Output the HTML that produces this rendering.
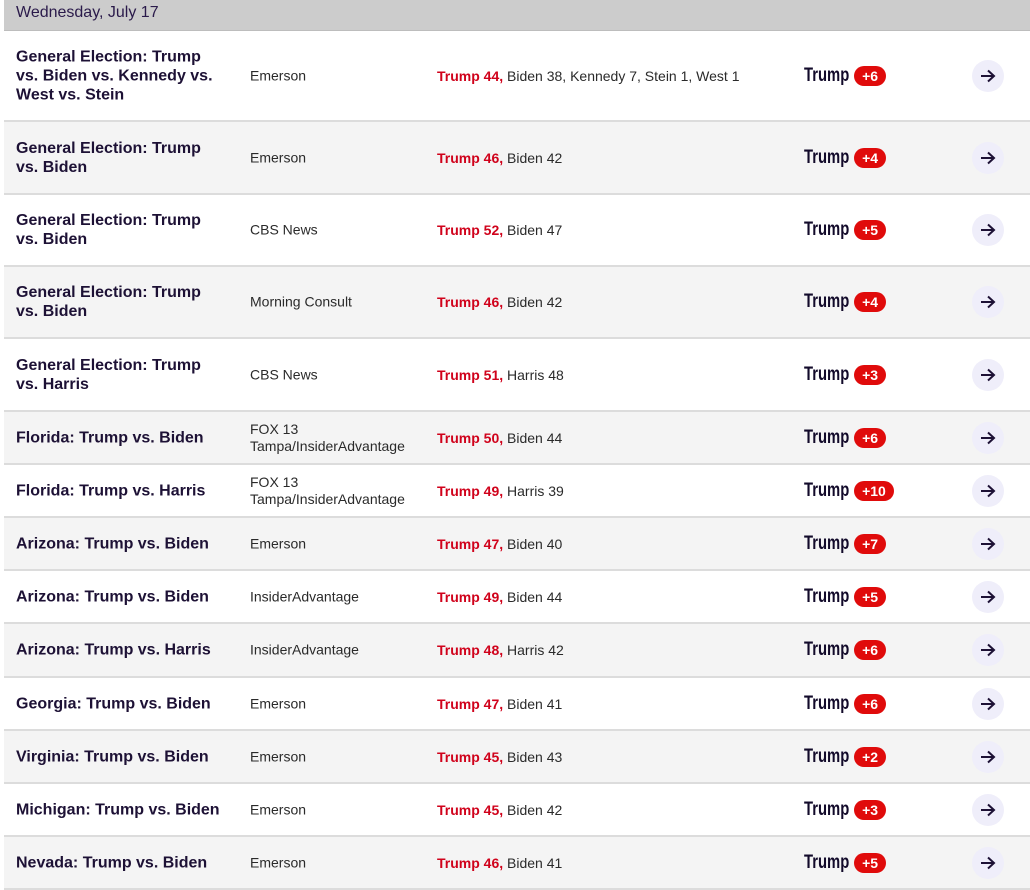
<!DOCTYPE html>
<html><head><meta charset="utf-8"><style>
body{margin:0;width:1030px;height:888px;overflow:hidden;background:#fff;font-family:"Liberation Sans",Arial,sans-serif;color:#1d1135}
.hd{position:absolute;left:4px;top:0;width:1026px;height:31px;background:#cccccc;border-bottom:1px solid #bdbdbd;box-sizing:border-box}
.hd span{position:absolute;left:12px;top:4px;font-size:16px;color:#2a1a4a}
.row{position:absolute;left:4px;width:1026px;border-bottom:2px solid #dcdcdc;box-sizing:border-box}
.row.g{background:#f4f4f4}
.c{position:absolute;top:50%;transform:translateY(-50%)}
.t{left:12px;width:205px;font-weight:bold;font-size:16px;line-height:19px;color:#1d1135}
.p{left:246px;font-size:14px;line-height:17px;color:#2a2a2a}
.r{left:433px;font-size:14px;color:#2a2a2a}
.r b{color:#d0021b}
.s{left:800px;font-weight:bold;font-size:19px;display:flex;align-items:center;color:#120a2a}
.s span{display:inline-block;transform:scaleX(.78);transform-origin:left center;margin-right:-12px}
.s i{font-style:normal;font-weight:bold;background:#e00b0b;color:#fff;font-size:14px;border-radius:10px;padding:2px 8px;margin-left:4px;line-height:16px}
.a{left:968px;width:32px;height:32px;border-radius:50%;background:#efeefa;display:flex;align-items:center;justify-content:center}
</style></head><body>
<div class="hd"><span>Wednesday, July 17</span></div>

<div class="row" style="top:31px;height:91px"><div class="c t">General Election: Trump vs. Biden vs. Kennedy vs. West vs. Stein</div><div class="c p">Emerson</div><div class="c r"><b>Trump 44,</b> Biden 38, Kennedy 7, Stein 1, West 1</div><div class="c s"><span>Trump</span><i>+6</i></div><div class="c a"><svg width="16" height="14" viewBox="0 0 16 14"><path d="M1 7H14M8 1.5L14 7L8 12.5" stroke="#1d1135" stroke-width="2" fill="none"/></svg></div></div>

<div class="row g" style="top:122px;height:73px"><div class="c t">General Election: Trump vs. Biden</div><div class="c p">Emerson</div><div class="c r"><b>Trump 46,</b> Biden 42</div><div class="c s"><span>Trump</span><i>+4</i></div><div class="c a"><svg width="16" height="14" viewBox="0 0 16 14"><path d="M1 7H14M8 1.5L14 7L8 12.5" stroke="#1d1135" stroke-width="2" fill="none"/></svg></div></div>

<div class="row" style="top:195px;height:72px"><div class="c t">General Election: Trump vs. Biden</div><div class="c p">CBS News</div><div class="c r"><b>Trump 52,</b> Biden 47</div><div class="c s"><span>Trump</span><i>+5</i></div><div class="c a"><svg width="16" height="14" viewBox="0 0 16 14"><path d="M1 7H14M8 1.5L14 7L8 12.5" stroke="#1d1135" stroke-width="2" fill="none"/></svg></div></div>

<div class="row g" style="top:267px;height:72px"><div class="c t">General Election: Trump vs. Biden</div><div class="c p">Morning Consult</div><div class="c r"><b>Trump 46,</b> Biden 42</div><div class="c s"><span>Trump</span><i>+4</i></div><div class="c a"><svg width="16" height="14" viewBox="0 0 16 14"><path d="M1 7H14M8 1.5L14 7L8 12.5" stroke="#1d1135" stroke-width="2" fill="none"/></svg></div></div>

<div class="row" style="top:339px;height:73px"><div class="c t">General Election: Trump vs. Harris</div><div class="c p">CBS News</div><div class="c r"><b>Trump 51,</b> Harris 48</div><div class="c s"><span>Trump</span><i>+3</i></div><div class="c a"><svg width="16" height="14" viewBox="0 0 16 14"><path d="M1 7H14M8 1.5L14 7L8 12.5" stroke="#1d1135" stroke-width="2" fill="none"/></svg></div></div>

<div class="row g" style="top:412px;height:53px"><div class="c t">Florida: Trump vs. Biden</div><div class="c p">FOX 13<br>Tampa/InsiderAdvantage</div><div class="c r"><b>Trump 50,</b> Biden 44</div><div class="c s"><span>Trump</span><i>+6</i></div><div class="c a"><svg width="16" height="14" viewBox="0 0 16 14"><path d="M1 7H14M8 1.5L14 7L8 12.5" stroke="#1d1135" stroke-width="2" fill="none"/></svg></div></div>

<div class="row" style="top:465px;height:53px"><div class="c t">Florida: Trump vs. Harris</div><div class="c p">FOX 13<br>Tampa/InsiderAdvantage</div><div class="c r"><b>Trump 49,</b> Harris 39</div><div class="c s"><span>Trump</span><i>+10</i></div><div class="c a"><svg width="16" height="14" viewBox="0 0 16 14"><path d="M1 7H14M8 1.5L14 7L8 12.5" stroke="#1d1135" stroke-width="2" fill="none"/></svg></div></div>

<div class="row g" style="top:518px;height:53px"><div class="c t">Arizona: Trump vs. Biden</div><div class="c p">Emerson</div><div class="c r"><b>Trump 47,</b> Biden 40</div><div class="c s"><span>Trump</span><i>+7</i></div><div class="c a"><svg width="16" height="14" viewBox="0 0 16 14"><path d="M1 7H14M8 1.5L14 7L8 12.5" stroke="#1d1135" stroke-width="2" fill="none"/></svg></div></div>

<div class="row" style="top:571px;height:53px"><div class="c t">Arizona: Trump vs. Biden</div><div class="c p">InsiderAdvantage</div><div class="c r"><b>Trump 49,</b> Biden 44</div><div class="c s"><span>Trump</span><i>+5</i></div><div class="c a"><svg width="16" height="14" viewBox="0 0 16 14"><path d="M1 7H14M8 1.5L14 7L8 12.5" stroke="#1d1135" stroke-width="2" fill="none"/></svg></div></div>

<div class="row g" style="top:624px;height:54px"><div class="c t">Arizona: Trump vs. Harris</div><div class="c p">InsiderAdvantage</div><div class="c r"><b>Trump 48,</b> Harris 42</div><div class="c s"><span>Trump</span><i>+6</i></div><div class="c a"><svg width="16" height="14" viewBox="0 0 16 14"><path d="M1 7H14M8 1.5L14 7L8 12.5" stroke="#1d1135" stroke-width="2" fill="none"/></svg></div></div>

<div class="row" style="top:678px;height:53px"><div class="c t">Georgia: Trump vs. Biden</div><div class="c p">Emerson</div><div class="c r"><b>Trump 47,</b> Biden 41</div><div class="c s"><span>Trump</span><i>+6</i></div><div class="c a"><svg width="16" height="14" viewBox="0 0 16 14"><path d="M1 7H14M8 1.5L14 7L8 12.5" stroke="#1d1135" stroke-width="2" fill="none"/></svg></div></div>

<div class="row g" style="top:731px;height:53px"><div class="c t">Virginia: Trump vs. Biden</div><div class="c p">Emerson</div><div class="c r"><b>Trump 45,</b> Biden 43</div><div class="c s"><span>Trump</span><i>+2</i></div><div class="c a"><svg width="16" height="14" viewBox="0 0 16 14"><path d="M1 7H14M8 1.5L14 7L8 12.5" stroke="#1d1135" stroke-width="2" fill="none"/></svg></div></div>

<div class="row" style="top:784px;height:53px"><div class="c t">Michigan: Trump vs. Biden</div><div class="c p">Emerson</div><div class="c r"><b>Trump 45,</b> Biden 42</div><div class="c s"><span>Trump</span><i>+3</i></div><div class="c a"><svg width="16" height="14" viewBox="0 0 16 14"><path d="M1 7H14M8 1.5L14 7L8 12.5" stroke="#1d1135" stroke-width="2" fill="none"/></svg></div></div>

<div class="row g" style="top:837px;height:53px"><div class="c t">Nevada: Trump vs. Biden</div><div class="c p">Emerson</div><div class="c r"><b>Trump 46,</b> Biden 41</div><div class="c s"><span>Trump</span><i>+5</i></div><div class="c a"><svg width="16" height="14" viewBox="0 0 16 14"><path d="M1 7H14M8 1.5L14 7L8 12.5" stroke="#1d1135" stroke-width="2" fill="none"/></svg></div></div>
</body></html>
